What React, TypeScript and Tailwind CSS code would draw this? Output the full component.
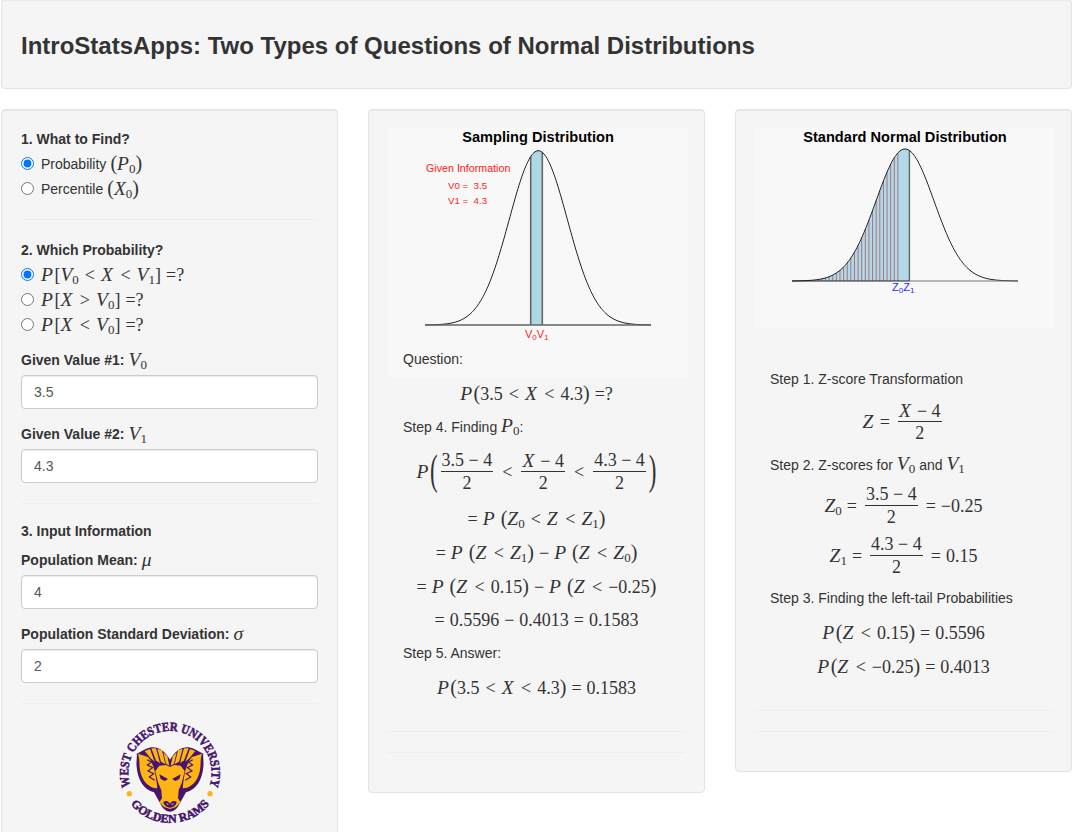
import React from "react";

const pdf = (x: number, cx: number, sd: number) => Math.exp(-0.5 * ((x - cx) / sd) ** 2);
function curve(cx: number, base: number, h: number, sd: number, x0: number, x1: number) {
  const pts: string[] = [];
  for (let x = x0; x <= x1 + 0.001; x += 1) pts.push(`${x.toFixed(1)},${(base - h * pdf(x, cx, sd)).toFixed(2)}`);
  return pts;
}

const I = ({ children }: { children: React.ReactNode }) => <span className="italic text-[19.5px] mr-[1.5px]">{children}</span>;
const S = ({ children }: { children: React.ReactNode }) => (
  <sub className="text-[13px] not-italic -ml-[1.5px]">{children}</sub>
);
const R = ({ children }: { children: React.ReactNode }) => <span className="mx-[5px]">{children}</span>;
const Lt = () => <span className="mx-[6px]">&lt;</span>;
const Gt = () => <span className="mx-[6px]">&gt;</span>;
const Lead = () => <span className="mr-[5px]">=</span>;
const L = () => <span className="text-[20px]">(</span>;
const Q = () => <span className="text-[20px]">)</span>;
const MathIn = ({ children }: { children: React.ReactNode }) => (
  <span className="font-['Liberation_Serif',serif] text-[18px] font-normal">{children}</span>
);

const Frac = ({ top, bottom }: { top: React.ReactNode; bottom: React.ReactNode }) => (
  <span className="inline-flex flex-col items-center align-middle mx-[3px] text-[18px]">
    <span className="px-[1px] leading-[21px] h-[21px] border-b border-[#333] box-content">{top}</span>
    <span className="leading-[23px]">{bottom}</span>
  </span>
);

const BigParen = ({ children }: { children: React.ReactNode }) => (
  <span className="inline-block text-[23px] leading-[23px] scale-y-[1.8] -mt-[3px]">{children}</span>
);

const Eq = ({ children, h = "h-[34px]" }: { children: React.ReactNode; h?: string }) => (
  <div className={`${h} flex items-center justify-center whitespace-nowrap font-['Liberation_Serif',serif] text-[18px] text-[#333]`}>
    {children}
  </div>
);

const Text = ({ children, cls }: { children: React.ReactNode; cls?: string }) => (
  <div className={`h-[20px] leading-[20px] px-[15px] whitespace-nowrap ${cls ?? ""}`}>{children}</div>
);

const Hr = ({ cls }: { cls: string }) => <div className={`h-px bg-[#eeeeee] ${cls}`} />;

const Label = ({ children, cls }: { children: React.ReactNode; cls?: string }) => (
  <div className={`h-[20px] leading-[20px] font-bold whitespace-nowrap flex items-center gap-[4px] ${cls ?? ""}`}>{children}</div>
);

const Radio = ({ name, checked, children }: { name: string; checked?: boolean; children: React.ReactNode }) => (
  <label className="h-[25px] flex items-center whitespace-nowrap">
    <input type="radio" name={name} defaultChecked={checked} className="w-[13px] h-[13px] m-0 mr-[7px]" />
    {children}
  </label>
);

const Field = ({ value }: { value: string }) => (
  <input
    type="text"
    defaultValue={value}
    className="block w-full h-[34px] mt-[5px] px-[12px] bg-white border border-[#cccccc] rounded-[4px] text-[14px] text-[#555555] shadow-[inset_0_1px_1px_rgba(0,0,0,0.075)]"
  />
);

const well = "bg-[#f5f5f5] border border-[#e3e3e3] rounded-[4px] shadow-[inset_0_1px_1px_rgba(0,0,0,0.05)]";

function Logo() {
  const purple = "#44146f";
  const gold = "#fdb515";
  const half = (
    <g>
      <path fill={gold} d="M84 116 L114 126 C132 146 138 180 142 220 C116 220 96 198 90 166 C87 150 90 134 84 116 Z" />
      <path fill="none" stroke={purple} strokeWidth="3.5" d="M112 134 L124 142 L112 150 L128 158 L114 168 L131 176 L118 186 L134 196" />
      <path fill={gold} d="M104 108 L122 130 L134 140 L120 102 Z" />
      <path fill={gold} d="M124 100 L138 136 L150 145 L138 100 Z" />
      <path fill={gold} d="M142 101 L153 140 L166 148 L156 106 Z" />
      <path fill={gold} d="M160 112 L168 146 L178 152 L172 124 Z" />
    </g>
  );
  return (
    <svg viewBox="0 0 360 351" width="120" height="117" className="block">
      <defs>
        <path id="logoTop" d="M62 214 A125 125 0 1 1 298 214" />
        <path id="logoBottom" d="M55 258 A152 152 0 0 0 305 258" />
      </defs>
      <text fill={purple} stroke={purple} strokeWidth="1.6" fontFamily="'Liberation Serif', serif" fontWeight="bold" fontSize="38">
        <textPath href="#logoTop" textLength="476" lengthAdjust="spacingAndGlyphs">WEST CHESTER UNIVERSITY</textPath>
      </text>
      <text fill={purple} stroke={purple} strokeWidth="1.6" fontFamily="'Liberation Serif', serif" fontWeight="bold" fontSize="36">
        <textPath href="#logoBottom" startOffset="12" textLength="270" lengthAdjust="spacingAndGlyphs">GOLDEN RAMS</textPath>
      </text>
      <circle cx="58" cy="236" r="8" fill={gold} />
      <circle cx="300" cy="236" r="8" fill={gold} />
      <path
        fill={purple}
        d="M180 134 C165 106 140 92 118 98 C98 103 84 116 80 116 C82 128 78 140 80 156 C84 195 100 224 132 232 L150 264 C158 282 170 290 180 290 C190 290 202 282 210 264 L228 232 C260 224 276 195 280 156 C282 140 278 128 280 116 C276 116 262 103 242 98 C220 92 195 106 180 134 Z"
      />
      {half}
      <g transform="translate(360 0) scale(-1 1)">{half}</g>
      <path
        fill={gold}
        d="M148 152 L168 150 L180 156 L192 150 L212 152 L224 168 L216 202 L206 226 L204 250 L212 262 L198 276 L180 282 L162 276 L148 262 L156 250 L154 226 L144 202 L136 168 Z"
      />
      <path fill={purple} d="M148 178 L174 192 L164 198 L152 192 Z M212 178 L186 192 L196 198 L208 192 Z" />
      <path fill={purple} d="M160 262 C168 254 176 260 180 266 C184 260 192 254 200 262 C198 272 188 278 180 278 C172 278 162 272 160 262 Z" />
      <path fill={gold} d="M168 264 L177 268 L172 270 Z M192 264 L183 268 L188 270 Z" />
    </svg>
  );
}

function SamplingPlot() {
  const cx = 150.3, base = 197, h = 174.3, sd = 29;
  const line = curve(cx, base, h, sd, 37, 263);
  const shade = curve(cx, base, h, sd, 143, 154);
  return (
    <svg width="300" height="250" className="block bg-[#f8f8f8] font-['Liberation_Sans',Arial,sans-serif]">
      <text x="150" y="14" textAnchor="middle" fontWeight="bold" fontSize="14.6" fill="#000">Sampling Distribution</text>
      <polygon points={`143,${base} ${shade.join(" ")} 154,${base}`} fill="#add8e6" />
      <line x1="142.7" y1={base} x2="142.7" y2={base - h * pdf(142.7, cx, sd)} stroke="#666" strokeWidth="1.6" />
      <line x1="154.3" y1={base} x2="154.3" y2={base - h * pdf(154.3, cx, sd)} stroke="#666" strokeWidth="1.6" />
      <polyline points={line.join(" ")} fill="none" stroke="#222" strokeWidth="1" />
      <line x1="37" y1={base} x2="263" y2={base} stroke="#666" strokeWidth="1.4" />
      <text x="38" y="44" fontSize="10.7" fill="#ff2020">Given Information</text>
      <text x="60" y="60.5" fontSize="9.7" fill="#ff2020" xmlSpace="preserve">V0 =  3.5</text>
      <text x="60" y="75.5" fontSize="9.7" fill="#ff2020" xmlSpace="preserve">V1 =  4.3</text>
      <text x="137" y="210" fontSize="11" fill="#ff2020">V<tspan fontSize="8" dy="1.5">0</tspan><tspan dy="-1.5" fontSize="11">V</tspan><tspan fontSize="8" dy="1.5">1</tspan></text>
    </svg>
  );
}

function StandardPlot() {
  const cx = 150, base = 153, h = 132, sd = 29;
  const line = curve(cx, base, h, sd, 37, 263);
  const shade = curve(cx, base, h, sd, 37, 154);
  const hatch: number[] = [];
  for (let x = 142.9; x > 62; x -= 3.62) hatch.push(x);
  return (
    <svg width="300" height="200" className="block bg-[#f8f8f8] font-['Liberation_Sans',Arial,sans-serif]">
      <text x="150" y="14" textAnchor="middle" fontWeight="bold" fontSize="14.6" fill="#000">Standard Normal Distribution</text>
      <polygon points={`37,${base} ${shade.join(" ")} 154.4,${base}`} fill="#b3d9e8" />
      {hatch.map((x) => (
        <line key={x} x1={x} y1={base} x2={x} y2={base - h * pdf(x, cx, sd)} stroke="#a5696f" strokeWidth="0.9" />
      ))}
      <line x1="154.4" y1={base} x2="154.4" y2={base - h * pdf(154.4, cx, sd)} stroke="#666" strokeWidth="1.4" />
      <polyline points={line.join(" ")} fill="none" stroke="#222" strokeWidth="1" />
      <line x1="37" y1={base} x2="154.4" y2={base} stroke="#222" strokeWidth="1.2" />
      <line x1="154.4" y1={base} x2="263" y2={base} stroke="#777" strokeWidth="1.2" />
      <text x="137" y="163" fontSize="11" fill="#2a2aff">Z<tspan fontSize="8" dy="1.5">0</tspan><tspan dy="-1.5" fontSize="11">Z</tspan><tspan fontSize="8" dy="1.5">1</tspan></text>
    </svg>
  );
}

export default function App() {
  return (
    <div className="h-[832px] overflow-hidden bg-white pl-px text-[14px] leading-[20px] text-[#333333] font-['Liberation_Sans',Arial,sans-serif]">
      <div className={`${well} w-[1071px] h-[90px] -mt-px pl-[19px] pt-[3px] flex items-center`}>
        <h2 className="text-[24px] font-bold leading-[26px] whitespace-nowrap">
          IntroStatsApps: Two Types of Questions of Normal Distributions
        </h2>
      </div>

      <div className="mt-[20px] flex items-start gap-[30px]">
        {/* Sidebar */}
        <div className={`${well} w-[337px] h-[760px] shrink-0 px-[19px] pt-[19px]`}>
          <Label>1. What to Find?</Label>
          <div className="mt-[2px]">
            <Radio name="find" checked>
              <span>Probability</span>
              <MathIn><span className="ml-[4px]"><L /><I>P</I><S>0</S><Q /></span></MathIn>
            </Radio>
            <Radio name="find">
              <span>Percentile</span>
              <MathIn><span className="ml-[4px]"><L /><I>X</I><S>0</S><Q /></span></MathIn>
            </Radio>
          </div>
          <Hr cls="mt-[18px]" />
          <Label cls="mt-[20px]">2. Which Probability?</Label>
          <div className="mt-[2px] font-['Liberation_Serif',serif] text-[18px]">
            <Radio name="prob" checked>
              <span><I>P</I>[<I>V</I><S>0</S><Lt /><I>X</I><Lt /><I>V</I><S>1</S>]<span className="ml-[5px]">=?</span></span>
            </Radio>
            <Radio name="prob">
              <span><I>P</I>[<I>X</I><Gt /><I>V</I><S>0</S>]<span className="ml-[5px]">=?</span></span>
            </Radio>
            <Radio name="prob">
              <span><I>P</I>[<I>X</I><Lt /><I>V</I><S>0</S>]<span className="ml-[5px]">=?</span></span>
            </Radio>
          </div>
          <Label cls="mt-[13px]">Given Value #1: <MathIn><I>V</I><S>0</S></MathIn></Label>
          <Field value="3.5" />
          <Label cls="mt-[15px]">Given Value #2: <MathIn><I>V</I><S>1</S></MathIn></Label>
          <Field value="4.3" />
          <Hr cls="mt-[20px]" />
          <Label cls="mt-[17px]">3. Input Information</Label>
          <Label cls="mt-[9px]">Population Mean: <MathIn><I>μ</I></MathIn></Label>
          <Field value="4" />
          <Label cls="mt-[15px]">Population Standard Deviation: <MathIn><I>σ</I></MathIn></Label>
          <Field value="2" />
          <Hr cls="mt-[20px]" />
          <div className="mt-[11px] flex justify-center">
            <Logo />
          </div>
        </div>

        {/* Sampling column */}
        <div className={`${well} w-[337px] h-[684px] shrink-0 px-[19px] pt-[19px]`}>
          <div className="-mt-px -mb-[29px]"><SamplingPlot /></div>
          <div className="relative">
            <Text>Question:</Text>
            <div className="mt-[7px]">
              <Eq><span><I>P</I><L />3.5<Lt /><I>X</I><Lt />4.3<Q /><span className="ml-[5px]">=?</span></span></Eq>
            </div>
            <div className="mt-[6px]"><Text>Step 4. Finding <MathIn><I>P</I><S>0</S></MathIn>:</Text></div>
            <div className="mt-[11px]">
              <Eq h="h-[50px]">
                <I>P</I>
                <BigParen>(</BigParen>
                <Frac top="3.5 − 4" bottom="2" />
                <Lt />
                <Frac top={<><I>X</I> − 4</>} bottom="2" />
                <Lt />
                <Frac top="4.3 − 4" bottom="2" />
                <BigParen>)</BigParen>
              </Eq>
            </div>
            <div className="mt-[4px]">
              <Eq><span><Lead /><I>P</I> <L /><I>Z</I><S>0</S><Lt /><I>Z</I><Lt /><I>Z</I><S>1</S><Q /></span></Eq>
              <Eq><span><Lead /><I>P</I> <L /><I>Z</I><Lt /><I>Z</I><S>1</S><Q /><R>−</R><I>P</I> <L /><I>Z</I><Lt /><I>Z</I><S>0</S><Q /></span></Eq>
              <Eq><span><Lead /><I>P</I> <L /><I>Z</I><Lt />0.15<Q /><R>−</R><I>P</I> <L /><I>Z</I><Lt />−0.25<Q /></span></Eq>
              <Eq><span><Lead />0.5596<R>−</R>0.4013<R>=</R>0.1583</span></Eq>
            </div>
            <div className="mt-[6px]"><Text>Step 5. Answer:</Text></div>
            <div className="mt-[7px]">
              <Eq><span><I>P</I><L />3.5<Lt /><I>X</I><Lt />4.3<Q /><R>=</R>0.1583</span></Eq>
            </div>
            <Hr cls="mt-[27px]" />
            <Hr cls="mt-[20px]" />
          </div>
        </div>

        {/* Standard column */}
        <div className={`${well} w-[337px] h-[663px] shrink-0 px-[19px] pt-[19px]`}>
          <div className="-mt-px mb-[41px]">
            <StandardPlot />
          </div>
          <Text>Step 1. Z-score Transformation</Text>
          <div className="mt-[8px]">
            <Eq h="h-[50px]"><I>Z</I><R>=</R><Frac top={<><I>X</I> − 4</>} bottom="2" /></Eq>
          </div>
          <div className="mt-[7px]"><Text>Step 2. Z-scores for <MathIn><I>V</I><S>0</S></MathIn> and <MathIn><I>V</I><S>1</S></MathIn></Text></div>
          <div className="mt-[7px]">
            <Eq h="h-[50px]"><span><I>Z</I><S>0</S></span><R>=</R><Frac top="3.5 − 4" bottom="2" /><R>=</R>−0.25</Eq>
            <Eq h="h-[50px]"><span><I>Z</I><S>1</S></span><R>=</R><Frac top="4.3 − 4" bottom="2" /><R>=</R>0.15</Eq>
          </div>
          <div className="mt-[7px]"><Text>Step 3. Finding the left-tail Probabilities</Text></div>
          <div className="mt-[7px]">
            <Eq><span><I>P</I><L /><I>Z</I><Lt />0.15<Q /><R>=</R>0.5596</span></Eq>
            <Eq><span><I>P</I><L /><I>Z</I><Lt />−0.25<Q /><R>=</R>0.4013</span></Eq>
          </div>
          <Hr cls="mt-[27px]" />
          <Hr cls="mt-[20px]" />
        </div>
      </div>
    </div>
  );
}
